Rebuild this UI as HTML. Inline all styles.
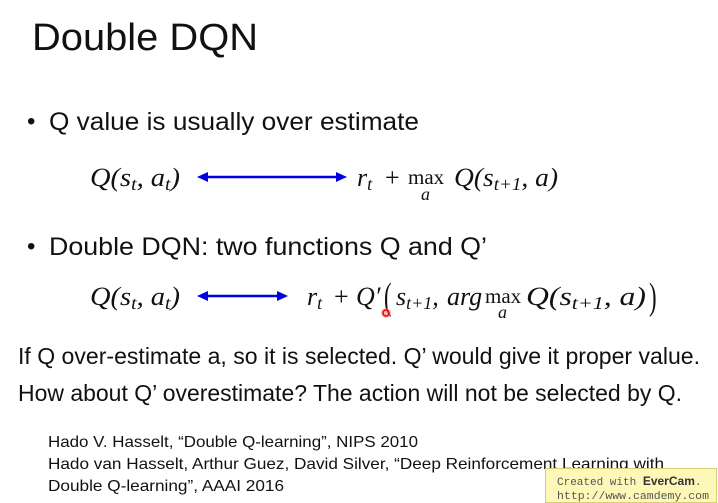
<!DOCTYPE html>
<html><head><meta charset="utf-8"><style>
html,body{margin:0;padding:0;background:#fff;width:718px;height:503px;overflow:hidden}
svg{display:block}
.s{font-family:"Liberation Sans",sans-serif;fill:#111}
.m{font-family:"Liberation Serif",serif;font-style:italic;fill:#111}
.r{font-family:"Liberation Serif",serif;fill:#111}
</style></head><body>
<svg width="718" height="503" viewBox="0 0 718 503" xmlns="http://www.w3.org/2000/svg">
<rect width="718" height="503" fill="#fff"/>
<text class="s" x="32" y="50" font-size="38" textLength="226" lengthAdjust="spacingAndGlyphs">Double DQN</text>
<text class="s" x="27" y="129" font-size="24">•</text>
<text class="s" x="49" y="130" font-size="25" textLength="370" lengthAdjust="spacingAndGlyphs">Q value is usually over estimate</text>

<!-- formula 1 -->
<text class="m" x="90" y="186" font-size="26" textLength="90" lengthAdjust="spacingAndGlyphs">Q(s<tspan font-size="18" dy="4">t</tspan><tspan dy="-4">, a</tspan><tspan font-size="18" dy="4">t</tspan><tspan dy="-4">)</tspan></text>
<line x1="205" y1="177" x2="340" y2="177" stroke="#0000e0" stroke-width="2.5"/>
<polygon points="197,177 208,172 208,182" fill="#0000e0"/>
<polygon points="347,177 336,172 336,182" fill="#0000e0"/>
<text class="m" x="357" y="186" font-size="26">r<tspan font-size="18" dy="4">t</tspan></text>
<text class="r" x="385" y="186" font-size="26">+</text>
<text class="r" x="408" y="184" font-size="21">max</text>
<text class="m" x="421" y="200" font-size="18">a</text>
<text class="m" x="454" y="186" font-size="26" textLength="104" lengthAdjust="spacingAndGlyphs">Q(s<tspan font-size="18" dy="4">t+1</tspan><tspan dy="-4">, a)</tspan></text>

<text class="s" x="27" y="254" font-size="24">•</text>
<text class="s" x="49" y="255" font-size="25" textLength="438" lengthAdjust="spacingAndGlyphs">Double DQN: two functions Q and Q’</text>

<!-- formula 2 -->
<text class="m" x="90" y="305" font-size="26" textLength="90" lengthAdjust="spacingAndGlyphs">Q(s<tspan font-size="18" dy="4">t</tspan><tspan dy="-4">, a</tspan><tspan font-size="18" dy="4">t</tspan><tspan dy="-4">)</tspan></text>
<line x1="205" y1="296" x2="280" y2="296" stroke="#0000e0" stroke-width="2.5"/>
<polygon points="197,296 208,291 208,301" fill="#0000e0"/>
<polygon points="288,296 277,291 277,301" fill="#0000e0"/>
<text class="m" x="307" y="305" font-size="26">r<tspan font-size="18" dy="4">t</tspan></text>
<text class="r" x="334" y="305" font-size="26">+</text>
<text class="m" x="356" y="305" font-size="26">Q′</text>
<text class="r" x="384" y="309" font-size="38" transform="translate(384 309) scale(0.6 1) translate(-384 -309)">(</text>
<text class="m" x="396" y="305" font-size="26">s<tspan font-size="18" dy="4">t+1</tspan><tspan dy="-4">,</tspan></text>
<text class="m" x="447" y="305" font-size="26">arg</text>
<text class="r" x="485" y="303" font-size="21">max</text>
<text class="m" x="498" y="318" font-size="18">a</text>
<text class="m" x="526" y="305" font-size="26" textLength="120" lengthAdjust="spacingAndGlyphs">Q(s<tspan font-size="18" dy="4">t+1</tspan><tspan dy="-4">, a)</tspan></text>
<text class="r" x="649" y="309" font-size="38" transform="translate(649 309) scale(0.6 1) translate(-649 -309)">)</text>
<circle cx="386" cy="313" r="5" fill="#f88" opacity="0.6"/>
<circle cx="386" cy="313" r="3" fill="none" stroke="#e00" stroke-width="1.5"/>

<text class="s" x="18" y="364" font-size="23" textLength="682" lengthAdjust="spacingAndGlyphs">If Q over-estimate a, so it is selected. Q’ would give it proper value.</text>
<text class="s" x="18" y="401" font-size="23" textLength="664" lengthAdjust="spacingAndGlyphs">How about Q’ overestimate? The action will not be selected by Q.</text>

<text class="s" x="48" y="447" font-size="16" fill="#222" textLength="370" lengthAdjust="spacingAndGlyphs">Hado V. Hasselt, “Double Q-learning”, NIPS 2010</text>
<text class="s" x="48" y="469" font-size="16" fill="#222" textLength="616" lengthAdjust="spacingAndGlyphs">Hado van Hasselt, Arthur Guez, David Silver, “Deep Reinforcement Learning with</text>
<text class="s" x="48" y="491" font-size="16" fill="#222" textLength="236" lengthAdjust="spacingAndGlyphs">Double Q-learning”, AAAI 2016</text>

<rect x="545.5" y="468.5" width="171" height="34" fill="#fdf8b8" stroke="#d8cf70"/>
<text x="557" y="485" font-family="Liberation Mono,monospace" font-size="11" fill="#555">Created with <tspan font-family="Liberation Sans,sans-serif" font-weight="bold" fill="#333" font-size="12">EverCam</tspan>.</text>
<text x="557" y="499" font-family="Liberation Mono,monospace" font-size="11" fill="#555" textLength="152" lengthAdjust="spacingAndGlyphs">http://www.camdemy.com</text>
</svg>
</body></html>
